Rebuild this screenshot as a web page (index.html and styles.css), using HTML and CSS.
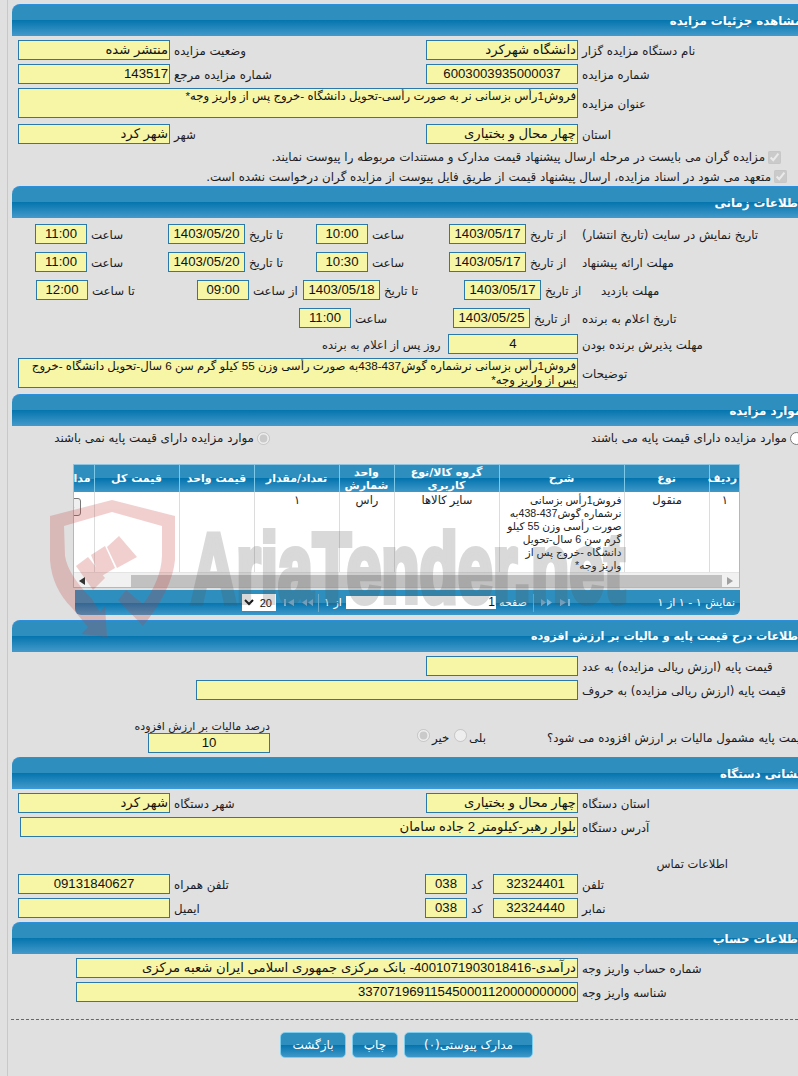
FILE: index.html
```html
<!DOCTYPE html>
<html lang="fa">
<head>
<meta charset="utf-8">
<title>مشاهده جزئیات مزایده</title>
<link rel="stylesheet" href="styles.css">
</head>
<body>
<div class="sheet" dir="rtl">

  <h2 class="bar">مشاهده جزئیات مزایده</h2>
  <div class="row std first"><div class="lab">نام دستگاه مزایده گزار</div><div class="field">دانشگاه شهرکرد</div><div class="lab">وضعیت مزایده</div><div class="field">منتشر شده</div></div>
  <div class="row std gap4"><div class="lab">شماره مزایده</div><div class="field mid">6003003935000037</div><div class="lab">شماره مزایده مرجع</div><div class="field">143517</div></div>
  <div class="row area gap4 tall"><div class="lab">عنوان مزایده</div><div class="field top">فروش1رأس بزسانی نر به صورت رأسی-تحویل دانشگاه -خروج پس از واریز وجه*</div></div>
  <div class="row std gap6"><div class="lab">استان</div><div class="field">چهار محال و بختیاری</div><div class="lab">شهر</div><div class="field">شهر کرد</div></div>
  <div class="check c1"><input type="checkbox" checked disabled><span>مزایده گران می بایست در مرحله ارسال پیشنهاد قیمت مدارک و مستندات مربوطه را پیوست نمایند.</span></div>
  <div class="check c2"><input type="checkbox" checked disabled><span>متعهد می شود در اسناد مزایده، ارسال پیشنهاد قیمت از طریق فایل پیوست از مزایده گران درخواست نشده است.</span></div>

  <h2 class="bar">اطلاعات زمانی</h2>
  <div class="row ta gap6"><div class="lab">تاریخ نمایش در سایت (تاریخ انتشار)</div><div class="lab">از تاریخ</div><div class="field mid">1403/05/17</div><div class="lab">ساعت</div><div class="field mid">10:00</div><div class="lab">تا تاریخ</div><div class="field mid">1403/05/20</div><div class="lab">ساعت</div><div class="field mid">11:00</div></div>
  <div class="row ta gap8"><div class="lab">مهلت ارائه پیشنهاد</div><div class="lab">از تاریخ</div><div class="field mid">1403/05/17</div><div class="lab">ساعت</div><div class="field mid">10:30</div><div class="lab">تا تاریخ</div><div class="field mid">1403/05/20</div><div class="lab">ساعت</div><div class="field mid">11:00</div></div>
  <div class="row tc gap8"><div class="lab">مهلت بازدید</div><div class="lab">از تاریخ</div><div class="field mid">1403/05/17</div><div class="lab">تا تاریخ</div><div class="field mid">1403/05/18</div><div class="lab">از ساعت</div><div class="field mid">09:00</div><div class="lab">تا ساعت</div><div class="field mid">12:00</div></div>
  <div class="row td gap8"><div class="lab">تاریخ اعلام به برنده</div><div class="lab">از تاریخ</div><div class="field mid">1403/05/25</div><div class="lab">ساعت</div><div class="field mid">11:00</div></div>
  <div class="row te gap6"><div class="lab">مهلت پذیرش برنده بودن</div><div class="field mid">4</div><div class="lab days">روز پس از اعلام به برنده</div></div>
  <div class="row area gap4 tall"><div class="lab">توضیحات</div><div class="field top">فروش1رأس بزسانی نرشماره گوش437-438به صورت رأسی وزن 55 کیلو گرم سن 6 سال-تحویل دانشگاه -خروج پس از واریز وجه*</div></div>

  <h2 class="bar gap6">موارد مزایده</h2>
  <div class="radios">
    <label class="opt"><input type="radio" name="kind"><span>موارد مزایده دارای قیمت پایه می باشند</span></label>
    <label class="opt"><input type="radio" name="kind" checked disabled><span>موارد مزایده دارای قیمت پایه نمی باشند</span></label>
  </div>

  <div class="grid-box">
    <table class="grid">
      <thead>
        <tr><th class="c-a">ردیف</th><th class="c-b">نوع</th><th class="c-c">شرح</th><th class="c-d">گروه کالا/نوع کاربری</th><th class="c-e">واحد شمارش</th><th class="c-f">تعداد/مقدار</th><th class="c-g">قیمت واحد</th><th class="c-h">قیمت کل</th><th class="c-i">مدارک</th></tr>
      </thead>
      <tbody>
        <tr><td class="mid">۱</td><td class="mid">منقول</td><td class="desc">فروش1رأس بزسانی<br>نرشماره گوش437-438به<br>صورت رأسی وزن 55 کیلو<br>گرم سن 6 سال-تحویل<br>دانشگاه -خروج پس از<br>واریز وجه*</td><td class="mid">سایر کالاها</td><td class="mid">راس</td><td class="mid">۱</td><td></td><td></td><td><span class="docs">جزئیات</span></td></tr>
      </tbody>
    </table>
    <div class="hscroll">
      <svg class="arrow" viewBox="0 0 6 8" width="6" height="8"><polygon points="0,0 6,4 0,8" fill="#a0a0a0"/></svg>
      <div class="thumb"></div>
      <svg class="arrow" viewBox="0 0 6 8" width="6" height="8"><polygon points="6,0 0,4 6,8" fill="#333"/></svg>
    </div>
  </div>
  <div class="pager">
    <div class="p-info">نمایش ۱ - ۱ از ۱</div>
    <svg class="p-nav" viewBox="0 0 11 7" width="11" height="7"><path d="M0 0 L6 3.5 L0 7Z M8 0 H10 V7 H8Z" fill="#7db4d6"/></svg>
    <svg class="p-nav" viewBox="0 0 12 7" width="12" height="7"><path d="M0 0 L5 3.5 L0 7Z M6 0 L11 3.5 L6 7Z" fill="#7db4d6"/></svg>
    <div class="p-sep"></div>
    <div class="p-txt">صفحه</div>
    <div class="p-input">1</div>
    <div class="p-txt">از ۱</div>
    <div class="p-sep"></div>
    <svg class="p-nav" viewBox="0 0 12 7" width="12" height="7"><path d="M5 0 L0 3.5 L5 7Z M11 0 L6 3.5 L11 7Z" fill="#7db4d6"/></svg>
    <svg class="p-nav" viewBox="0 0 11 7" width="11" height="7"><path d="M10 0 L4 3.5 L10 7Z M0 0 H2 V7 H0Z" fill="#7db4d6"/></svg>
    <div></div>
    <select class="p-select"><option>20</option></select>
  </div>

  <h2 class="bar gap5 narrow">اطلاعات درج قیمت پایه و مالیات بر ارزش افزوده</h2>
  <div class="row std gap4"><div class="lab">قیمت پایه (ارزش ریالی مزایده) به عدد</div><div class="field"></div><div></div><div></div></div>
  <div class="row wide gap4"><div class="lab">قیمت پایه (ارزش ریالی مزایده) به حروف</div><div class="field"></div></div>
  <div class="row tax">
    <div class="lab nopad">قیمت پایه مشمول مالیات بر ارزش افزوده می شود؟</div>
    <div class="lab nopad">بلی</div>
    <input type="radio" name="vat" disabled>
    <div class="lab nopad">خیر</div>
    <input type="radio" name="vat" checked disabled>
    <div></div>
    <div class="tax-box"><div class="tax-title">درصد مالیات بر ارزش افزوده</div><div class="field mid">10</div></div>
  </div>

  <h2 class="bar gap4">نشانی دستگاه</h2>
  <div class="row std gap4"><div class="lab">استان دستگاه</div><div class="field">چهار محال و بختیاری</div><div class="lab">شهر دستگاه</div><div class="field">شهر کرد</div></div>
  <div class="row addr gap4"><div class="lab">آدرس دستگاه</div><div class="field">بلوار رهبر-کیلومتر 2 جاده سامان</div></div>
  <div class="contact">اطلاعات تماس</div>
  <div class="row phone"><div class="lab">تلفن</div><div class="field mid">32324401</div><div class="lab">کد</div><div class="field mid">038</div><div class="lab">تلفن همراه</div><div class="field mid">09131840627</div></div>
  <div class="row phone gap4"><div class="lab">نمابر</div><div class="field mid">32324440</div><div class="lab">کد</div><div class="field mid">038</div><div class="lab">ایمیل</div><div class="field"></div></div>

  <h2 class="bar gap4">اطلاعات حساب</h2>
  <div class="row acct gap4"><div class="lab">شماره حساب واریز وجه</div><div class="field">درآمدی-4001071903018416- بانک مرکزی جمهوری اسلامی ایران شعبه مرکزی</div></div>
  <div class="row acct gap4"><div class="lab">شناسه واریز وجه</div><div class="field">337071969115450001120000000000</div></div>

  <div class="actions">
    <button class="btn b-docs" type="button">مدارک پیوستی(۰)</button>
    <button class="btn b-print" type="button">چاپ</button>
    <button class="btn b-back" type="button">بازگشت</button>
  </div>
</div>

<svg class="mark" viewBox="0 0 798 1076" width="798" height="1076" aria-hidden="true">
  <g class="mark-red">
    <path fill-rule="evenodd" d="M50 516 L112 500 L175 516 L175 560 Q172 590 143 626 L118 600 L126 590 L143 604 Q161 580 162 556 L162 526 L112 512 L64 526 L65 556 Q68 575 92 599 L100 612 L105 606 L107 637 L81 634 L88 627 L72 608 Q52 588 50 560 Z"/>
    <polygon points="119,536 137,557 117,568 107,547"/>
    <polygon points="105,546 115,568 100,577 91,555"/>
    <polygon points="88,557 105,578 93,590 76,566"/>
  </g>
  <text class="mark-text" x="191" y="602" textLength="434" lengthAdjust="spacingAndGlyphs" direction="ltr">AriaTender.net</text>
</svg>
</body>
</html>
```
FILE: styles.css
```css
* { box-sizing: border-box; }
html, body {
  margin: 0;
  height: 1076px;
  overflow: hidden;
  background: #e0e0e0;
}
body {
  position: relative;
  width: 798px;
  font-family: "Liberation Sans", "DejaVu Sans", sans-serif;
  font-size: 12px;
  color: #1c1c24;
}
.sheet {
  margin-left: 7px;
  width: 831px;
  height: 1076px;
  padding-top: 4px;
  border-left: 1px solid #c8c8c8;
}

/* section bars */
.bar, .grid th, .pager, .btn {
  background: linear-gradient(#2e8fbf 0, #2e8fbf 50%, #0474ae 50%, #3f98c8 100%);
}
.bar {
  margin: 0 0 0 4px;
  height: 32px;
  padding: 0 36px 0 0;
  border-top: 1px solid #2b8fdc;
  border-bottom: 1px solid #3a98dc;
  border-top-left-radius: 8px;
  color: #fff;
  font-size: 11.8px;
  font-weight: bold;
  line-height: 32px;
  font-family: "DejaVu Sans", sans-serif;
}
.bar.gap4 { margin-top: 4px; }
.bar.gap5 { margin-top: 5px; }
.bar.gap6 { margin-top: 6px; }
.bar.narrow { font-size: 11.2px; }

/* form rows */
.row { display: grid; align-items: center; height: 20px; }
.tall { height: 30px; align-items: stretch; }
.tall .lab { align-self: center; }
.first, .gap4 { margin-top: 4px; }
.gap6 { margin-top: 6px; }
.gap8 { margin-top: 8px; }
.std { padding-left: 10px; grid-template-columns: 1fr 152px 256px 152px; }
.area { padding-left: 10px; grid-template-columns: 1fr 560px; }
.wide { padding-left: 188px; grid-template-columns: 1fr 382px; }
.addr { padding-left: 12px; grid-template-columns: 1fr 558px; }
.acct { padding-left: 68px; grid-template-columns: 1fr 502px; }
.ta { padding-left: 27px; grid-template-columns: 1fr 52px 77px 81px 52px 71px 77px 81px 52px; }
.tc { padding-left: 28px; grid-template-columns: 1fr 56px 77px 84px 77px 54px 52px 109px 52px; }
.td { padding-left: 291px; grid-template-columns: 1fr 48px 77px 102px 52px; }
.te { padding-left: 313px; grid-template-columns: 1fr 130px 127px; }
.phone { padding-left: 10px; grid-template-columns: 1fr 85px 26px 42px 255px 152px; }

.lab {
  padding: 1px 0 0 4px;
  text-align: left;
  white-space: nowrap;
  font-family: "DejaVu Sans", sans-serif;
  font-size: 11.8px;
}
.lab.days { padding-left: 1px; font-size: 11.4px; }
.nopad { padding-left: 0; }
.field {
  height: 100%;
  padding: 0 1px;
  background: #f7f5a6;
  border: 1px solid #2a79a9;
  color: #111;
  font-size: 13.2px;
  line-height: 18px;
  white-space: nowrap;
  overflow: hidden;
  text-align: right;
}
.field.mid { text-align: center; }
.field.top { white-space: normal; font-size: 11.7px; line-height: 14px; }

/* consent checks */
.check { display: flex; align-items: center; gap: 3px; font-family: "DejaVu Sans", sans-serif; font-size: 11.9px; white-space: nowrap; }
.check input, .opt input { margin: 0; flex: none; }
.c1 { height: 18px; padding-right: 57px; margin-top: 4px; }
.c2 { height: 19px; padding-right: 51px; margin-top: 1px; }

/* item options */
.radios { display: grid; grid-template-columns: 533px 1fr; height: 16px; margin-top: 4px; padding-right: 35px; font-family: "DejaVu Sans", sans-serif; font-size: 11.9px; }
.opt { display: flex; align-items: center; gap: 3px; white-space: nowrap; }

/* items table */
.grid-box {
  width: 667px;
  height: 124px;
  margin: 18px 98px 0 0;
  border: 1px solid #8cc4e2;
  background: #fff;
  overflow: hidden;
}
.grid {
  width: 705px;
  height: 106px;
  table-layout: fixed;
  border-collapse: collapse;
  font-family: "Liberation Sans", "DejaVu Sans", sans-serif;
  font-size: 11.5px;
}
.grid th {
  height: 27px;
  padding: 0 2px;
  border-left: 1px solid #7cc9ea;
  color: #fff;
  font-family: "DejaVu Sans", sans-serif;
  font-size: 11px;
  font-weight: bold;
  line-height: 13px;
  text-align: center;
}
.grid td {
  height: 79px;
  padding: 2px 2px 0 3px;
  border-left: 1px solid #dcdcdc;
  vertical-align: top;
  line-height: 13px;
  text-align: right;
  color: #222;
}
.grid td.mid { text-align: center; }
.grid td.desc { white-space: nowrap; font-size: 10.6px; }
.c-a { width: 30px; }
.c-b { width: 85px; }
.c-c { width: 125px; }
.c-d { width: 105px; }
.c-e { width: 55px; }
.c-f { width: 85px; }
.c-g { width: 75px; }
.c-h { width: 85px; }
.c-i { width: 60px; }
.grid th.c-i { text-align: right; padding-right: 3px; border-left: 0; }
.docs {
  display: block;
  width: 46px;
  height: 18px;
  margin: 4px 11px 0 0;
  border: 1px solid #777;
  border-radius: 3px;
  background: #efefef;
  text-align: center;
  line-height: 16px;
  color: #222;
}
.hscroll {
  display: flex;
  align-items: center;
  height: 17px;
  padding: 0 6px 0 5px;
  background: #f1f1f1;
  border-top: 1px solid #e4e4e4;
}
.thumb { flex: none; width: 591px; height: 13px; margin: 0 5px 0 46px; background: #c1c1c1; }
.arrow { flex: none; }

/* pager */
.pager {
  display: grid;
  grid-template-columns: 167px 16px 21px 6px 34px 150px 26px 4px 17px 19px 4px 34px;
  align-items: center;
  justify-items: center;
  width: 665px;
  height: 25px;
  margin: 2px 98px 0 0;
  border-bottom-left-radius: 6px;
  border-bottom-right-radius: 6px;
  color: #fff;
  font-family: "DejaVu Sans", sans-serif;
  font-size: 11px;
}
.p-info { justify-self: start; padding-right: 5px; white-space: nowrap; }
.p-txt { white-space: nowrap; }
.p-sep { width: 1px; height: 18px; background: #6aaacb; }
.p-input { width: 150px; height: 13px; background: #fff; color: #111; line-height: 13px; text-align: right; padding-right: 1px; font-family: "Liberation Sans", sans-serif; font-size: 12px; }
.p-select { width: 34px; height: 17px; padding: 0; border: 0; border-radius: 0; background-color: #fff; color: #111; font-family: "Liberation Sans", sans-serif; font-size: 11px; }

/* VAT row */
.tax {
  grid-template-columns: 1fr 78px 17px 20px 18px 144px 135px;
  height: 32px;
  margin-top: 21px;
  padding-left: 127px;
}
.tax input { margin: 8px 0 0; justify-self: center; align-self: start; }
.tax-box { display: flex; flex-direction: column; }
.tax-title { height: 12px; line-height: 12px; text-align: center; white-space: nowrap; font-family: "DejaVu Sans", sans-serif; font-size: 11px; }
.tax-box .field { height: 20px; margin-left: 13px; width: 122px; }

.contact { height: 12px; margin-top: 21px; padding-right: 110px; line-height: 12px; font-family: "DejaVu Sans", sans-serif; font-size: 11.5px; }
.phone:not(.gap4) { margin-top: 4px; }

/* actions */
.actions {
  display: flex;
  gap: 6px;
  margin: 17px 0 0 3px;
  padding: 12px 305px 0 0;
  border-top: 1px dashed #2a7aa5;
}
.btn {
  height: 26px;
  padding: 0;
  border: 1px solid #7ccdee;
  border-radius: 5px;
  color: #fff;
  font-family: "DejaVu Sans", sans-serif;
  font-size: 12px;
}
.b-docs { width: 129px; }
.b-print { width: 46px; }
.b-back { width: 66px; }

/* site watermark */
.mark { position: absolute; left: 0; top: 0; pointer-events: none; }
.mark-red { fill: #c63c3c; opacity: .24; }
.mark-text {
  fill: #555;
  stroke: #555;
  stroke-width: 6px;
  opacity: .22;
  font-family: "Liberation Sans", sans-serif;
  font-size: 98px;
  font-weight: bold;
}
```
